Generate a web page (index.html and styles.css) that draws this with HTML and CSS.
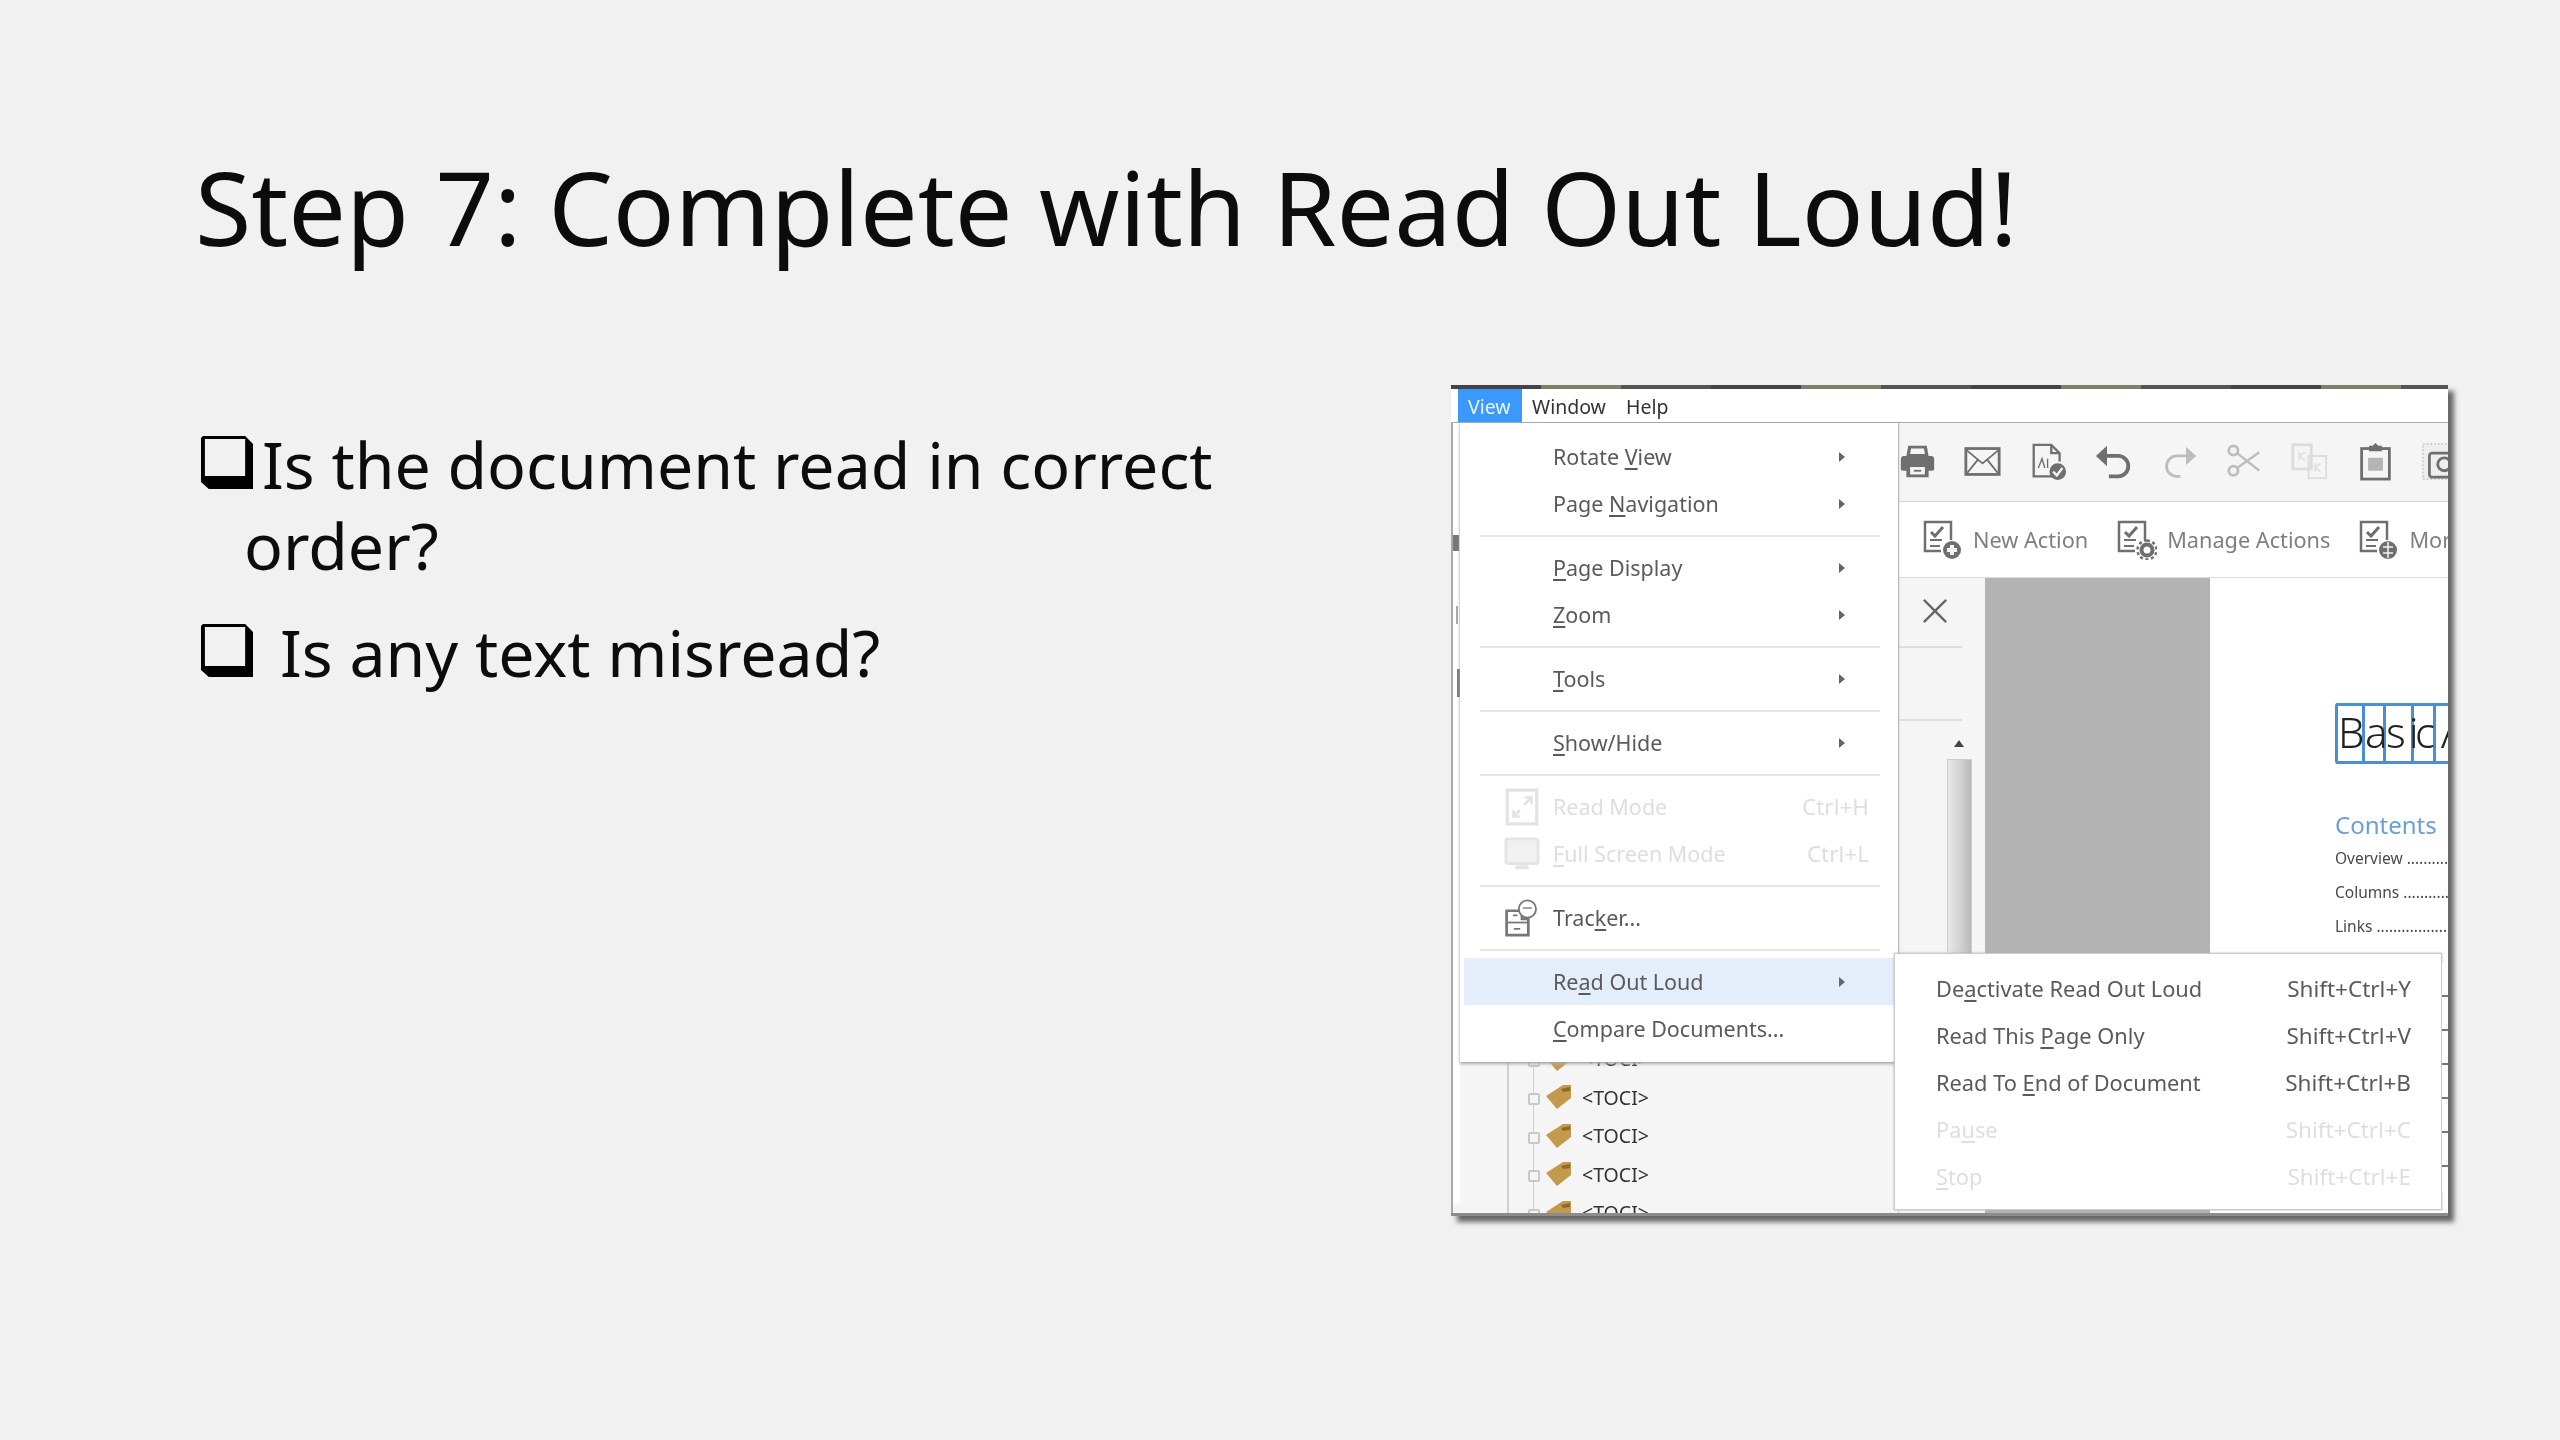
FILE: index.html
```
<!DOCTYPE html>
<html lang="en">
<head>
<meta charset="utf-8">
<title>Step 7</title>
<link rel="stylesheet" href="styles.css">
</head>
<body>
<main class="slide">
  <h1 class="title">Step 7: Complete with Read Out Loud!</h1>
  <div class="content">
    <section class="points">
      <div class="point">
        <svg class="box" viewBox="0 0 54 56" preserveAspectRatio="none"><path class="box-ink" d="M3 1H46L54 9V54H9L1 47V3ZM5 4V41H46V4Z"/></svg>
        <p class="tight">Is the document read in correct<br><span class="hang">order?</span></p>
      </div>
      <div class="point second">
        <svg class="box" viewBox="0 0 54 56" preserveAspectRatio="none"><path class="box-ink" d="M3 1H46L54 9V54H9L1 47V3ZM5 4V43H46V4Z"/></svg>
        <p class="wide">Is any text misread?</p>
      </div>
    </section>

    <figure class="frame">
      <div class="frame-top"></div>
      <div class="menubar">
        <span class="mb active">View</span>
        <span class="mb">Window</span>
        <span class="mb">Help</span>
      </div>
      <div class="work">
        <div class="navpane">
          <div class="tree">
            <div class="toci"><i class="node"></i><svg class="tag" viewBox="0 0 26 26"><path d="M1 12L18 1H26V14L12 25Z"/><path class="tag-d" d="M16 5L25 3V7L18 8Z"/></svg><span>&lt;TOCI&gt;</span></div>
            <div class="toci"><i class="node"></i><svg class="tag" viewBox="0 0 26 26"><path d="M1 12L18 1H26V14L12 25Z"/><path class="tag-d" d="M16 5L25 3V7L18 8Z"/></svg><span>&lt;TOCI&gt;</span></div>
            <div class="toci"><i class="node"></i><svg class="tag" viewBox="0 0 26 26"><path d="M1 12L18 1H26V14L12 25Z"/><path class="tag-d" d="M16 5L25 3V7L18 8Z"/></svg><span>&lt;TOCI&gt;</span></div>
            <div class="toci"><i class="node"></i><svg class="tag" viewBox="0 0 26 26"><path d="M1 12L18 1H26V14L12 25Z"/><path class="tag-d" d="M16 5L25 3V7L18 8Z"/></svg><span>&lt;TOCI&gt;</span></div>
            <div class="toci"><i class="node"></i><svg class="tag" viewBox="0 0 26 26"><path d="M1 12L18 1H26V14L12 25Z"/><path class="tag-d" d="M16 5L25 3V7L18 8Z"/></svg><span>&lt;TOCI&gt;</span></div>
          </div>
        </div>
        <div class="rightpane">
          <div class="toolbar">
            <svg class="ti" viewBox="0 0 40 40"><path class="fill" d="M10 3H30L32 14H8Z"/><path class="hole" d="M13 6H27L28 12H12Z"/><path class="fill" d="M5 14H35Q38 14 38 18V28Q38 30 35 30H32V37H8V30H5Q2 30 2 28V18Q2 14 5 14Z"/><rect class="hole" x="12" y="26" width="16" height="8"/><rect class="fill" x="16" y="29" width="8" height="2"/></svg>
            <svg class="ti" viewBox="0 0 40 40"><rect class="st" x="2" y="6" width="36" height="28" stroke-width="3"/><path class="st" stroke-width="2" d="M3 8L20 22L37 8M3 33L15 18M37 33L25 18"/></svg>
            <svg class="ti" viewBox="0 0 40 40"><path class="st" stroke-width="2.5" d="M24 36H4V2H23L32 11V20M23 2V11H32"/><path class="st" stroke-width="1.5" d="M9 27L13 17L16 27M19 17V27"/><circle class="fill" cx="30" cy="31" r="9"/><path class="wst" stroke-width="2.5" d="M25 31L29 35L35 27"/></svg>
            <svg class="ti" viewBox="0 0 40 40"><path class="st" stroke-width="4" d="M6 14H25A10 10 0 0 1 25 36H15"/><path class="fill" d="M13 3V25L1 14Z"/></svg>
            <svg class="ti light" viewBox="0 0 40 40"><path class="st" stroke-width="3" d="M32 14H17A11 11 0 0 0 17 36H21"/><path class="fill" d="M27 4V24L38 14Z"/></svg>
            <svg class="ti light" viewBox="0 0 40 40"><circle class="st" cx="8" cy="8" r="5" stroke-width="3"/><circle class="st" cx="8" cy="30" r="5" stroke-width="3"/><path class="st" stroke-width="2.5" d="M12 11L36 30M12 27L36 10"/></svg>
            <svg class="ti lighter" viewBox="0 0 40 40"><rect class="st" x="2" y="2" width="20" height="26" stroke-width="3"/><rect class="st" x="19" y="14" width="19" height="24" stroke-width="2"/><path class="st" stroke-width="1.5" d="M9 10V19M9 14L15 10M9 14L15 19M26 22V31M26 26L32 22M26 26L32 31"/></svg>
            <svg class="ti" viewBox="0 0 40 40"><rect class="st" x="5" y="6" width="30" height="33" stroke-width="3"/><path class="fill" d="M13 3H17L20 0L23 3H27V9H13Z"/><rect class="fill2" x="12" y="16" width="16" height="14"/></svg>
            <svg class="ti" viewBox="0 0 40 40"><rect class="dash" x="1" y="1" width="60" height="38"/><rect class="st" x="8" y="11" width="40" height="26" rx="3" stroke-width="3"/><circle class="st" cx="24" cy="23" r="7" stroke-width="3"/></svg>
          </div>
          <div class="actions">
            <span class="action"><svg class="ai" viewBox="0 0 40 40"><use href="#actdoc"/><circle class="fill" cx="29" cy="30" r="9"/><path class="wst" stroke-width="4" d="M24 30H34M29 25V35"/></svg>New Action</span>
            <span class="action"><svg class="ai" viewBox="0 0 40 40"><use href="#actdoc"/><circle class="st" cx="30" cy="30" r="5.5" stroke-width="4"/><path class="st" stroke-width="2.5" stroke-dasharray="3 2.6" d="M30 20.500A9.500 9.500 0 1 1 29.900 20.500"/></svg>Manage Actions</span>
            <span class="action"><svg class="ai" viewBox="0 0 40 40"><use href="#actdoc"/><circle class="fill" cx="29" cy="30" r="9"/><path class="wst" stroke-width="1.500" d="M24 27H34M24 33H34M29 22V38"/></svg>More Tools</span>
          </div>
          <div class="docarea">
            <div class="sidepane">
              <svg class="close" viewBox="0 0 28 28"><path d="M2 2L26 26M26 2L2 26"/></svg>
              <div class="rule"></div>
              <div class="rule second-rule"></div>
              <div class="scrollup"></div>
              <div class="thumb"></div>
            </div>
            <div class="gray"></div>
            <div class="page">
              <div class="heading"><span class="cell c1">B</span><span class="cell c2">a</span><span class="cell c3">si</span><span class="cell c4">c</span><span class="cell c5">A</span></div>
              <div class="contents">Contents</div>
              <div class="tocline">Overview ..........................</div>
              <div class="tocline">Columns ..........................</div>
              <div class="tocline">Links ................................</div>
            </div>
          </div>
        </div>
      </div>

      <div class="leftmarks"><i class="mark m1"></i><i class="mark m2"></i><i class="mark m3"></i></div>

      <div class="menu main-menu">
        <div class="row"><span class="slot"></span><span class="label">Rotate <u>V</u>iew</span><i class="arrow"></i></div>
        <div class="row"><span class="slot"></span><span class="label">Page <u>N</u>avigation</span><i class="arrow"></i></div>
        <hr class="sep">
        <div class="row"><span class="slot"></span><span class="label"><u>P</u>age Display</span><i class="arrow"></i></div>
        <div class="row"><span class="slot"></span><span class="label"><u>Z</u>oom</span><i class="arrow"></i></div>
        <hr class="sep">
        <div class="row"><span class="slot"></span><span class="label"><u>T</u>ools</span><i class="arrow"></i></div>
        <hr class="sep">
        <div class="row"><span class="slot"></span><span class="label"><u>S</u>how/Hide</span><i class="arrow"></i></div>
        <hr class="sep">
        <div class="row off"><span class="slot"><svg class="mi" viewBox="0 0 34 36"><rect x="3" y="2" width="28" height="32" fill="none" stroke="#e2e2e2" stroke-width="3"/><path d="M9 27L15 21M19 16L26 9M20 9H26V15M9 21V27H15" fill="none" stroke="#e2e2e2" stroke-width="2.500"/></svg></span><span class="label">Read Mode</span><span class="keys">Ctrl+H</span></div>
        <div class="row off"><span class="slot"><svg class="mi" viewBox="0 0 38 36"><rect x="2" y="2" width="34" height="26" rx="2" fill="#f1f1f1" stroke="#e4e4e4" stroke-width="3"/><rect x="12" y="30" width="14" height="4" fill="#e4e4e4"/></svg></span><span class="label"><u>F</u>ull Screen Mode</span><span class="keys">Ctrl+L</span></div>
        <hr class="sep">
        <div class="row"><span class="slot"><svg class="mi" viewBox="0 0 38 42"><path d="M2 13H19V22H26V40H2Z" fill="#fff" stroke="#777" stroke-width="3"/><path d="M2 26H26" stroke="#777" stroke-width="2"/><path d="M9 18H14M10 33H17" stroke="#777" stroke-width="2"/><circle cx="25" cy="11" r="9.500" fill="#fff" stroke="#777" stroke-width="2"/><path d="M20 10H30" stroke="#999" stroke-width="2"/></svg></span><span class="label">Trac<u>k</u>er...</span></div>
        <hr class="sep">
        <div class="row hot"><span class="slot"></span><span class="label">Re<u>a</u>d Out Loud</span><i class="arrow"></i></div>
        <div class="row"><span class="slot"></span><span class="label"><u>C</u>ompare Documents...</span></div>
      </div>

      <div class="menu sub-menu">
        <div class="row"><span class="label">De<u>a</u>ctivate Read Out Loud</span><span class="keys">Shift+Ctrl+Y</span></div>
        <div class="row"><span class="label">Read This <u>P</u>age Only</span><span class="keys">Shift+Ctrl+V</span></div>
        <div class="row"><span class="label">Read To <u>E</u>nd of Document</span><span class="keys">Shift+Ctrl+B</span></div>
        <div class="row off"><span class="label">Pa<u>u</u>se</span><span class="keys">Shift+Ctrl+C</span></div>
        <div class="row off"><span class="label"><u>S</u>top</span><span class="keys">Shift+Ctrl+E</span></div>
      </div>
      <div class="ticks"></div>

      <svg class="defs" width="0" height="0"><defs><g id="actdoc"><path class="st" stroke-width="2.500" d="M18 31H2V2H28V20"/><path class="st" stroke-width="3" d="M8 12L12 16L20 7"/><path class="st" stroke-width="2" d="M7 20H19M7 26H17"/></g></defs></svg>
    </figure>
  </div>
</main>
</body>
</html>
```
FILE: styles.css
```
* { box-sizing: border-box; }
html, body { margin: 0; padding: 0; }
body { width: 2560px; height: 1440px; background: #f1f1f1; overflow: hidden; font-family: "Noto Sans", sans-serif; }

.slide { width: 2560px; height: 1440px; padding: 146px 0 0 196px; display: flex; flex-direction: column; }
.title { margin: 0 0 0 -1px; height: 121px; font-size: 102.400px; line-height: 121px; font-weight: 400; color: #0c0c0c; white-space: nowrap; }
.content { display: flex; justify-content: space-between; padding-right: 112px; padding-top: 118px; }

.points { padding-top: 38.500px; font-size: 64.400px; color: #0c0c0c; }
.point { display: flex; align-items: flex-start; height: 162px; position: relative; }
.point.second { height: 81px; margin-top: 26px; }
.point p { margin: 0; line-height: 81px; white-space: nowrap; }
.box { width: 53px; height: 56px; flex: none; margin: 11.500px 0 0 4px; }
.box-ink { fill: #000; fill-rule: evenodd; }
.tight { margin-left: 9px !important; }
.hang { margin-left: -18px; }
.wide { margin-left: 27px !important; }

.frame { position: relative; margin: 0; width: 997px; height: 831px; display: flex; flex-direction: column; background: #fff; box-shadow: 6px 6px 5px #666; filter: blur(.7px); }
.frame-top { height: 4px; flex: none; background: repeating-linear-gradient(90deg, #444 0 90px, #7c8068 90px 170px, #555 170px 260px); }
.menubar { height: 34px; flex: none; display: flex; padding-left: 7px; font-size: 19.500px; color: #333; align-items: stretch; border-bottom: 1px solid #aaa; }
.mb { padding: 0 10px 0 0; line-height: 36px; margin-right: 10px; }
.mb.active { background: #3b99fc; color: #e8f3ff; padding: 0 10px; width: 64px; margin-right: 10px; }

.work { flex: 1; display: flex; min-height: 0; border-bottom: 3px solid #8c8c8c; }
.navpane { width: 447px; flex: none; background: #f5f5f5; border-left: 2px solid #aaa; overflow: hidden; padding: 616.500px 0 0 54px; position: relative; }
.tree { height: 178px; border-left: 2px solid #d0d0d0; padding-left: 19px; }
.toci { height: 38.500px; display: flex; align-items: center; font-size: 19.500px; color: #333; position: relative; }
.toci::before { content: ""; position: absolute; left: 5px; top: 0; bottom: 0; width: 1px; background: #d0d0d0; }
.node { width: 12px; height: 12px; border: 2px solid #c8c8c8; border-radius: 2px; background: #f5f5f5; flex: none; margin-top: 4px; position: relative; }
.tag { width: 26px; height: 26px; margin: 0 11px 0 5px; flex: none; fill: #c39a4c; }
.tag-d { fill: #8c6c2e; }

.rightpane { flex: 1; min-width: 0; display: flex; flex-direction: column; border-left: 1px solid #ccc; overflow: hidden; }
.toolbar { height: 79px; flex: none; display: flex; align-items: center; gap: 28.400px; padding-bottom: 2px; background: #f5f5f5; border-bottom: 1px solid #d6d6d6; overflow: hidden; }
.ti { width: 37px; height: 37px; flex: none; overflow: visible; color: #6f6f6f; }
.ti.light { color: #bdbdbd; }
.ti.lighter { color: #dcdcdc; }
.st { fill: none; stroke: currentColor; }
.fill { fill: currentColor; }
.fill2 { fill: #b5b5b5; }
.hole { fill: #f5f5f5; }
.wst { fill: none; stroke: #f5f5f5; }
.dash { fill: #eee; stroke: #aaa; stroke-dasharray: 2 2; }

.actions { height: 76px; flex: none; display: flex; align-items: center; gap: 29px; padding-left: 24px; background: #fff; border-bottom: 1px solid #ddd; font-size: 21.700px; color: #7f7f7f; white-space: nowrap; overflow: hidden; }
.action { display: flex; align-items: center; gap: 10px; line-height: 36px; }
.ai { width: 40px; height: 40px; flex: none; color: #6f6f6f; }

.docarea { flex: 1; display: flex; min-height: 0; }
.sidepane { width: 86px; flex: none; background: #f5f5f5; position: relative; padding-top: 20px; }
.close { display: block; width: 26px; height: 26px; margin-left: 23px; fill: none; stroke: #666; stroke-width: 2.500; }
.rule { height: 2px; width: 63px; background: #ddd; margin-top: 22px; }
.second-rule { margin-top: 71px; }
.scrollup { width: 0; height: 0; border: 5px solid transparent; border-top: 0; border-bottom: 7px solid #444; margin: 19px 0 0 55px; }
.thumb { width: 25px; height: 200px; margin: 12px 0 0 48px; border: 1px solid #ccc; background: linear-gradient(90deg, #e8e8e8, #cfcfcf 60%, #b8b8b8); }
.gray { width: 225px; flex: none; background: #b3b3b3; }
.page { flex: 1; background: #fff; padding: 125px 0 0 125px; overflow: hidden; white-space: nowrap; color: #444; min-width: 0; }
.heading { display: flex; height: 61px; width: 130px; border: 3px solid #4a8ed4; border-radius: 3px; border-right: 0; font-size: 42px; line-height: 52px; color: #222; font-weight: 300; }
.cell { border-right: 3px solid #4a8ed4; padding-left: 3px; flex: none; }
.c1 { width: 27px; padding-left: 0; }
.c2 { width: 21px; padding-left: 0; }
.c3 { width: 28px; padding-left: 0; letter-spacing: 3px; }
.c4 { width: 22px; padding-left: 1px; }
.c5 { border: 0; padding-left: 5px; }
.contents { color: #6a9fd8; font-size: 24px; line-height: 30px; margin-top: 46px; }
.tocline { font-size: 15.500px; line-height: 20px; height: 34px; color: #4a4a4a; }
.contents + .tocline { margin-top: 7.500px; }

.leftmarks { position: absolute; left: 2px; top: 38px; width: 7px; height: 780px; background: #fff; }
.mark { position: absolute; background: #777; }
.m1 { left: 0; top: 112px; width: 6px; height: 16px; }
.m2 { left: 3px; top: 183px; width: 2px; height: 18px; background: #aaa; }
.m3 { left: 4px; top: 246px; width: 3px; height: 28px; }

.menu { position: absolute; background: #fff; color: #5a5a5a; font-size: 21.500px; }
.main-menu { left: 9px; top: 38px; width: 438px; height: 639px; padding-top: 10px; box-shadow: 0 0 1px #999, 0 2px 3px #aaa; }
.sub-menu { left: 443px; top: 568px; width: 548px; height: 257px; padding: 11.500px 30px 0 41px; border: 1px solid #ccc; box-shadow: 0 0 2px #aaa; font-size: 21.800px; }
.row { height: 47px; display: flex; align-items: center; white-space: nowrap; }
.main-menu .row { padding-right: 29px; }
.sub-menu .row { height: 46.800px; padding: 0; }
.slot { width: 93px; flex: none; display: flex; justify-content: flex-end; padding-right: 13px; }
.label { flex: 1; }
.row u { text-decoration-thickness: 1.500px; text-underline-offset: 3px; }
.arrow { width: 0; height: 0; border: 5px solid transparent; border-right: 0; border-left: 6px solid #666; margin-right: 24px; }
.keys { flex: none; font-size: 22.500px; }
.off { color: #dedede; }
.hot { background: #e3eefa; margin-left: 4px; }
.hot .slot { width: 89px; }
.sep { height: 17px; margin: 0; border: 0; position: relative; background: linear-gradient(#e6e6e6, #e6e6e6) no-repeat 20px 8px / 400px 2px; }
.mi { width: 36px; height: 38px; flex: none; }
.defs { position: absolute; }
.ticks { position: absolute; left: 991px; top: 578px; width: 6px; height: 230px; background: repeating-linear-gradient(#fff 0 32px, #777 32px 34px); }
```
